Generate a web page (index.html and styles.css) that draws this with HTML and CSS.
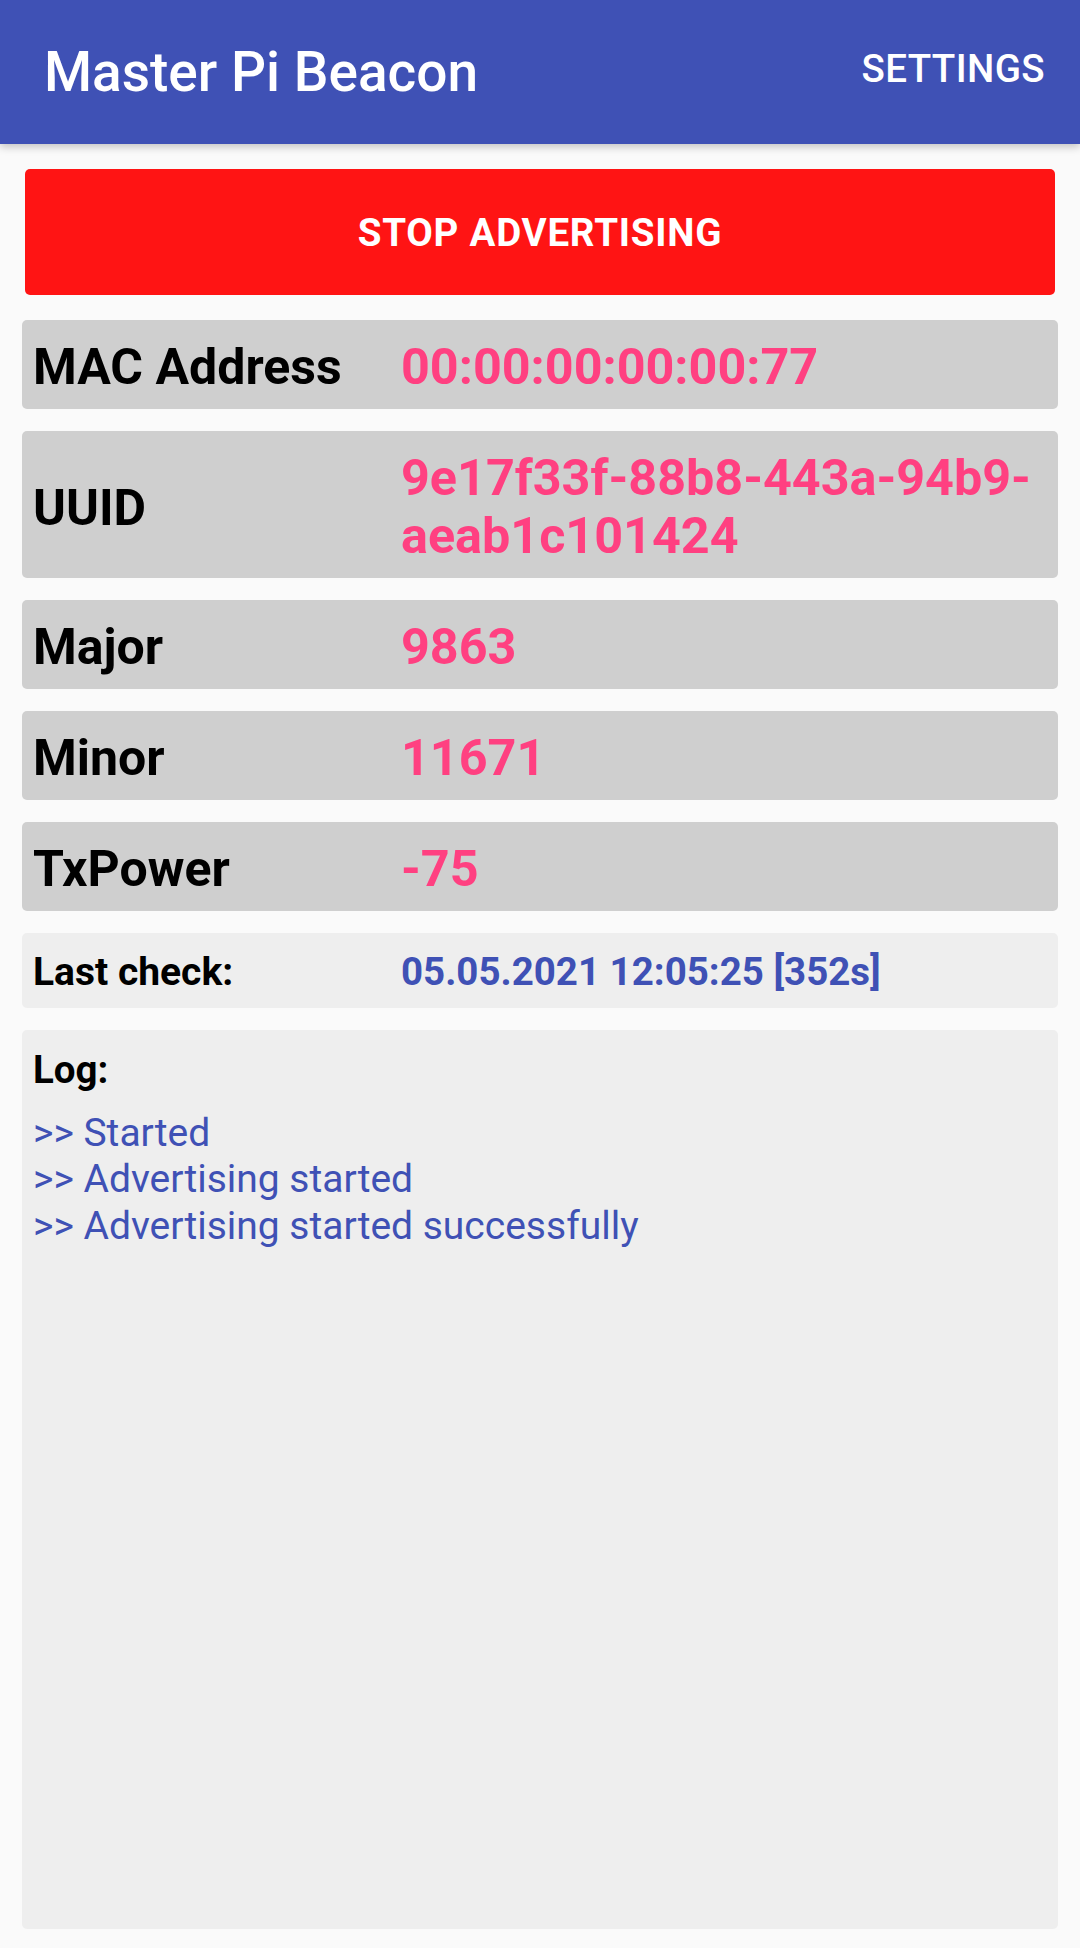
FILE: index.html
```html
<!DOCTYPE html>
<html lang="en">
<head>
<meta charset="utf-8">
<title>Master Pi Beacon</title>
<link rel="stylesheet" href="styles.css">
</head>
<body>
<div class="app">
  <header class="toolbar">
    <h1 class="toolbar-title">Master Pi Beacon</h1>
    <span class="toolbar-action">SETTINGS</span>
  </header>
  <main class="content">
    <button class="stop-btn" type="button">STOP ADVERTISING</button>
    <div class="row">
      <span class="row-label">MAC Address</span>
      <span class="row-value">00:00:00:00:00:77</span>
    </div>
    <div class="row row-multi">
      <span class="row-label">UUID</span>
      <span class="row-value">9e17f33f-88b8-443a-94b9-aeab1c101424</span>
    </div>
    <div class="row">
      <span class="row-label">Major</span>
      <span class="row-value">9863</span>
    </div>
    <div class="row">
      <span class="row-label">Minor</span>
      <span class="row-value">11671</span>
    </div>
    <div class="row">
      <span class="row-label">TxPower</span>
      <span class="row-value">-75</span>
    </div>
    <div class="row row-small">
      <span class="row-label">Last check:</span>
      <span class="row-value">05.05.2021 12:05:25 [352s]</span>
    </div>
    <section class="log">
      <div class="log-title">Log:</div>
      <div class="log-lines">
        <div class="log-line">&gt;&gt; Started</div>
        <div class="log-line">&gt;&gt; Advertising started</div>
        <div class="log-line">&gt;&gt; Advertising started successfully</div>
      </div>
    </section>
  </main>
</div>
</body>
</html>
```
FILE: styles.css
```css
* {
  box-sizing: border-box;
}

html, body {
  margin: 0;
  padding: 0;
}

body {
  background: #fafafa;
  font-family: Roboto, "Noto Sans", "Liberation Sans", sans-serif;
}

.app {
  display: flex;
  flex-direction: column;
  height: 1948px;
}

.toolbar {
  position: relative;
  z-index: 1;
  flex: 0 0 144px;
  display: flex;
  align-items: center;
  justify-content: space-between;
  padding: 0 35px 0 44px;
  background: #3f51b5;
  box-shadow: 0 3px 8px rgba(0, 0, 0, 0.22);
  color: #ffffff;
}

.toolbar-title {
  margin: 0;
  font-size: 55px;
  font-weight: 500;
  line-height: 1;
}

.toolbar-action {
  font-size: 38.5px;
  font-weight: 500;
  line-height: 1;
  letter-spacing: 0.01em;
  margin-top: -6px;
}

.content {
  flex: 1;
  display: flex;
  flex-direction: column;
  gap: 22px;
  padding: 25px 22px 19px;
}

.stop-btn {
  flex: 0 0 126px;
  margin: 0 3px 3px;
  border: none;
  border-radius: 5px;
  background: #ff1414;
  color: #ffffff;
  font-family: inherit;
  font-size: 38.5px;
  font-weight: 700;
  letter-spacing: 0.02em;
  padding: 0;
}

.row {
  display: grid;
  grid-template-columns: 368px 1fr;
  align-items: baseline;
  padding: 17.5px 11px 13.5px;
  background: #cfcfcf;
  border-radius: 5px;
}

.row-label {
  font-size: 50px;
  font-weight: 700;
  line-height: 58px;
  color: #000000;
}

.row-value {
  font-size: 50.3px;
  font-weight: 700;
  line-height: 58px;
  color: #ff4081;
}

.row-multi .row-label {
  align-self: center;
  padding-top: 2px;
}

.row-small {
  background: #eeeeee;
  padding: 16px 11px 13px;
}

.row-small .row-label {
  font-size: 39px;
  line-height: 46px;
}

.row-small .row-value {
  font-size: 38.5px;
  line-height: 46px;
  color: #3f51b5;
}

.log {
  flex: 1;
  background: #eeeeee;
  border-radius: 5px;
  padding: 17px 11px;
}

.log-title {
  font-size: 38.5px;
  font-weight: 700;
  color: #000000;
}

.log-lines {
  margin-top: 18px;
}

.log-line {
  font-size: 39px;
  line-height: 46.3px;
  color: #3f51b5;
}
```
